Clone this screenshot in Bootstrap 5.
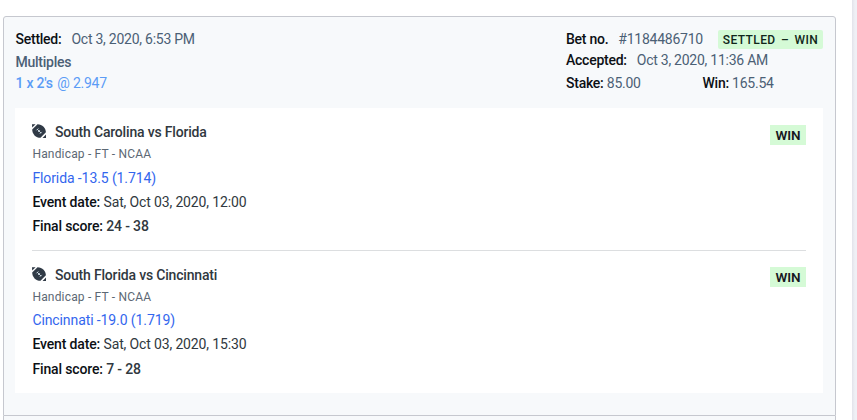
<!DOCTYPE html>
<html lang="en">
<head>
<meta charset="utf-8">
<title>Bet history</title>
<link href="https://cdn.jsdelivr.net/npm/bootstrap@5.3.0/dist/css/bootstrap.min.css" rel="stylesheet">
<style>
body{font-family:Roboto,"Liberation Sans",sans-serif;font-size:14px;line-height:20px;color:#303840;background:#fff;height:420px;overflow:hidden;white-space:nowrap}
.page-main{width:852px;padding:16px 0 0 3px}
.page-edge{width:5px;background:linear-gradient(90deg,#e2e3ea,#eff0f5 3px)}
.bet{width:833px;height:400px;background:#f7f9fb;border:1px solid #c6c8cf;border-radius:3px 3px 0 0;padding:12px 12px 0 11px}
.bet-next{width:833px;height:10px;background:#f7f9fb;border:1px solid #c6c8cf;border-width:0 1px}
.bet-head{height:79px;color:#4b6075;letter-spacing:-.25px;padding-left:.5px}
.bet-info{width:257px}
.fw-medium{font-weight:500}
.lbl{font-weight:500;color:#0c1015}
.row-a{height:23px}
.row-b{height:21px}
.row-c{height:22px}
.label-gap{margin-right:10px}
.stake{width:136.500px}
.price{color:#5b9cf6}
.price .fw-medium{margin-right:1.500px}
.state{font-size:12px;font-weight:500;line-height:20px;height:19px;width:105px;letter-spacing:.4px;word-spacing:2px;background:#d5fad6;color:#10261a;border-radius:2px;margin-top:1px}
.legs{height:285px;padding:0 17px;letter-spacing:-.14px}
.leg{height:142px;padding-top:14px}
.leg + .leg{border-top:1px solid #dcdee0;height:143px}
.leg + .leg .result{margin-top:2px}
.leg + .leg .leg-sub{height:23px!important}
.leg + .leg .leg-date{height:25px!important}
.ball{width:14px;height:14px;margin:2px 8.500px 0 0}
.leg-title{height:22px;letter-spacing:-.18px}
.leg-text > div:nth-child(n+2){height:24px}
.leg-text > .leg-sub{font-size:12px;letter-spacing:.18px;color:#5c6874}
.leg-text{padding-left:.4px}
.leg-pick{color:#3366ee;letter-spacing:-.1px}
.result{width:36px;height:20px;line-height:20px;margin-top:3px;background:#d5fad6;color:#17171f;font-size:13.500px;font-weight:600}
</style>
<script src="https://cdn.jsdelivr.net/npm/bootstrap@5.3.0/dist/js/bootstrap.bundle.min.js"></script>
</head>
<body class="d-flex">
<svg class="d-none"><symbol id="football" viewBox="0 0 14 14"><path d="M5.500.300C8 .400 10 1.200 11.600 2.800 13 4.400 13.800 6 13.900 8.300L8.500 13.800C6 13.700 4.200 13 2.600 11.400 1 9.700.300 8 .200 5.600Z" fill="#303a46"/><path d="M0 .2H3.600L.2 3.600ZM14 13.900H10.500L14 10.400Z" fill="#303a46"/><path d="m5.100 5.100 4 4M4.500 6.300l1.800-1.800M6.200 7.900 7.900 6.200M7.900 9.700 9.700 7.900" fill="none" stroke="#c9d5de" stroke-width="1"/></symbol></svg>
<main class="page-main flex-shrink-0">
  <section class="bet">
    <header class="bet-head d-flex justify-content-between">
      <div>
        <div class="row-a"><span class="lbl label-gap">Settled:</span><span>Oct 3, 2020, 6:53 PM</span></div>
        <div class="row-b fw-medium">Multiples</div>
        <div class="row-c price"><span class="fw-medium">1 x 2's</span> @ 2.947</div>
      </div>
      <div class="bet-info">
        <div class="row-b d-flex justify-content-between align-items-start"><div><span class="lbl label-gap">Bet no.</span><span>#1184486710</span></div><span class="state text-center">SETTLED – WIN</span></div>
        <div class="row-a"><span class="lbl label-gap">Accepted:</span><span>Oct 3, 2020, 11:36 AM</span></div>
        <div class="d-flex"><div class="stake"><span class="lbl">Stake:</span> 85.00</div><div><span class="lbl">Win:</span> 165.54</div></div>
      </div>
    </header>
    <div class="legs bg-white">
      <article class="leg d-flex justify-content-between">
        <div class="leg-text">
          <div class="leg-title d-flex fw-medium"><svg class="ball"><use href="#football"/></svg>South Carolina vs Florida</div>
          <div class="leg-sub">Handicap - FT - NCAA</div>
          <div class="leg-pick">Florida -13.5 (1.714)</div>
          <div class="leg-date"><span class="lbl">Event date:</span> Sat, Oct 03, 2020, 12:00</div>
          <div class="fw-medium"><span class="lbl">Final score:</span> 24 - 38</div>
        </div>
        <span class="result text-center">WIN</span>
      </article>
      <article class="leg d-flex justify-content-between">
        <div class="leg-text">
          <div class="leg-title d-flex fw-medium"><svg class="ball"><use href="#football"/></svg>South Florida vs Cincinnati</div>
          <div class="leg-sub">Handicap - FT - NCAA</div>
          <div class="leg-pick">Cincinnati -19.0 (1.719)</div>
          <div class="leg-date"><span class="lbl">Event date:</span> Sat, Oct 03, 2020, 15:30</div>
          <div class="fw-medium"><span class="lbl">Final score:</span> 7 - 28</div>
        </div>
        <span class="result text-center">WIN</span>
      </article>
    </div>
  </section>
  <div class="bet-next"></div>
</main>
<div class="page-edge flex-shrink-0"></div>
</body>
</html>
